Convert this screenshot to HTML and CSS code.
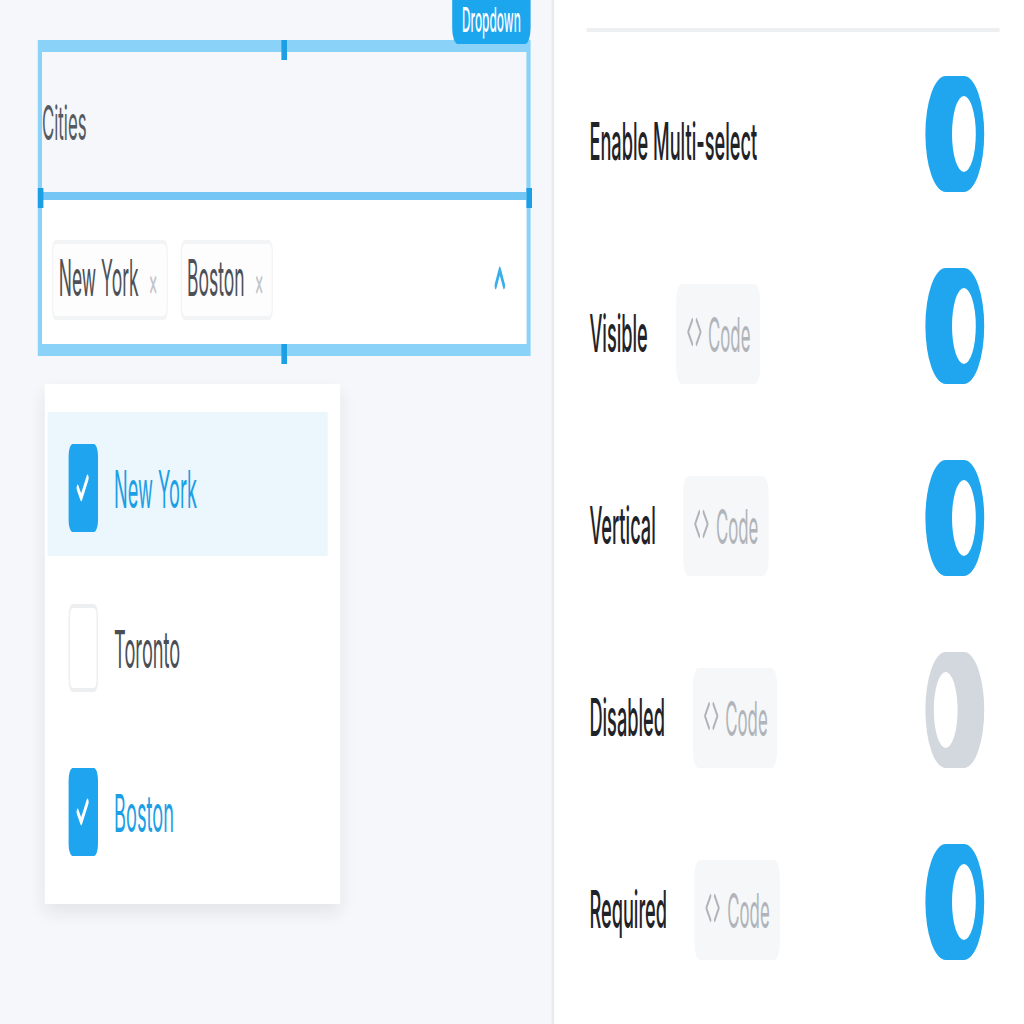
FILE: index.html
```html
<!DOCTYPE html>
<html lang="en">
<head>
<meta charset="utf-8">
<title>Dropdown builder</title>
<link rel="stylesheet" href="styles.css">
</head>
<body>
<div class="stage">
  <div class="canvas">
    <div class="selection">
      <div class="badge">Dropdown</div>
      <span class="handle handle-top"></span>
      <span class="handle handle-bottom"></span>
      <span class="handle handle-left"></span>
      <span class="handle handle-right"></span>
      <div class="field-label">Cities</div>
      <div class="field-input">
        <span class="tag"><span class="tag-text">New York</span><span class="tag-x">×</span></span>
        <span class="tag"><span class="tag-text">Boston</span><span class="tag-x">×</span></span>
        <svg class="chevron" viewBox="0 0 8 7" width="8" height="7"><polyline points="1,5.5 4,1.5 7,5.5" fill="none" stroke="#3aaee9" stroke-width="1.6" stroke-linecap="round" stroke-linejoin="round"/></svg>
      </div>
    </div>
    <div class="menu">
      <div class="option option-active">
        <span class="check check-on"><svg viewBox="0 0 10 8" width="10" height="8"><polyline points="1.5,4 4,6.5 8.5,1.5" fill="none" stroke="#fff" stroke-width="1.6" stroke-linecap="round" stroke-linejoin="round"/></svg></span>
        <span class="option-text option-text-on">New York</span>
      </div>
      <div class="option">
        <span class="check"></span>
        <span class="option-text">Toronto</span>
      </div>
      <div class="option">
        <span class="check check-on"><svg viewBox="0 0 10 8" width="10" height="8"><polyline points="1.5,4 4,6.5 8.5,1.5" fill="none" stroke="#fff" stroke-width="1.6" stroke-linecap="round" stroke-linejoin="round"/></svg></span>
        <span class="option-text option-text-on">Boston</span>
      </div>
    </div>
  </div>
  <div class="props">
    <div class="props-head"></div>
    <div class="props-rows">
      <div class="prop-row">
        <span class="prop-label">Enable Multi-select</span>
        <span class="toggle"><span class="thumb"></span></span>
      </div>
      <div class="prop-row">
        <span class="prop-label">Visible</span>
        <span class="code"><svg viewBox="0 0 12 12" width="12" height="12"><polyline points="4.5,3 1.5,6 4.5,9" fill="none" stroke="#b0b4ba" stroke-width="1.1" stroke-linecap="round" stroke-linejoin="round"/><polyline points="7.5,3 10.5,6 7.5,9" fill="none" stroke="#b0b4ba" stroke-width="1.1" stroke-linecap="round" stroke-linejoin="round"/></svg>Code</span>
        <span class="toggle"><span class="thumb"></span></span>
      </div>
      <div class="prop-row">
        <span class="prop-label">Vertical</span>
        <span class="code"><svg viewBox="0 0 12 12" width="12" height="12"><polyline points="4.5,3 1.5,6 4.5,9" fill="none" stroke="#b0b4ba" stroke-width="1.1" stroke-linecap="round" stroke-linejoin="round"/><polyline points="7.5,3 10.5,6 7.5,9" fill="none" stroke="#b0b4ba" stroke-width="1.1" stroke-linecap="round" stroke-linejoin="round"/></svg>Code</span>
        <span class="toggle"><span class="thumb"></span></span>
      </div>
      <div class="prop-row">
        <span class="prop-label">Disabled</span>
        <span class="code"><svg viewBox="0 0 12 12" width="12" height="12"><polyline points="4.5,3 1.5,6 4.5,9" fill="none" stroke="#b0b4ba" stroke-width="1.1" stroke-linecap="round" stroke-linejoin="round"/><polyline points="7.5,3 10.5,6 7.5,9" fill="none" stroke="#b0b4ba" stroke-width="1.1" stroke-linecap="round" stroke-linejoin="round"/></svg>Code</span>
        <span class="toggle toggle-off"><span class="thumb"></span></span>
      </div>
      <div class="prop-row">
        <span class="prop-label">Required</span>
        <span class="code"><svg viewBox="0 0 12 12" width="12" height="12"><polyline points="4.5,3 1.5,6 4.5,9" fill="none" stroke="#b0b4ba" stroke-width="1.1" stroke-linecap="round" stroke-linejoin="round"/><polyline points="7.5,3 10.5,6 7.5,9" fill="none" stroke="#b0b4ba" stroke-width="1.1" stroke-linecap="round" stroke-linejoin="round"/></svg>Code</span>
        <span class="toggle"><span class="thumb"></span></span>
      </div>
    </div>
  </div>
</div>
</body>
</html>
```
FILE: styles.css
```css
html, body {
  margin: 0;
  padding: 0;
  width: 1024px;
  height: 1024px;
  overflow: hidden;
  background: #ffffff;
  font-family: Inter, "Noto Sans", "Liberation Sans", sans-serif;
}

.stage {
  width: 731.5px;
  height: 256px;
  display: flex;
  transform: scale(1.4, 4);
  transform-origin: 0 0;
}

/* ---------- left canvas ---------- */
.canvas {
  width: 396px;
  flex: none;
  background: #f5f7fa;
  border-right: 2px solid #e8eaee;
  padding-top: 10px;
  box-sizing: border-box;
  display: flex;
  flex-direction: column;
}

.selection {
  position: relative;
  margin-left: 27px;
  width: 352px;
  height: 79px;
  box-sizing: border-box;
  border: 3px solid #8ad2f8;
  display: flex;
  flex-direction: column;
}

.badge {
  position: absolute;
  right: -3px;
  bottom: calc(100% + 2px);
  height: 11px;
  padding: 0 7px;
  background: #1ca6ee;
  color: #ffffff;
  font-size: 8.5px;
  font-weight: 500;
  line-height: 11px;
  border-radius: 0 0 4px 4px;
}

.handle {
  position: absolute;
  width: 4px;
  height: 5px;
  background: #1d9fe6;
}
.handle-top { left: calc(50% - 2px); top: -3.5px; }
.handle-bottom { left: calc(50% - 2px); bottom: -4.5px; }
.handle-left { left: -3.5px; top: calc(50% - 2.5px); }
.handle-right { right: -3.5px; top: calc(50% - 2.5px); }

.field-label {
  height: 34.5px;
  padding-top: 1px;
  box-sizing: border-box;
  display: flex;
  align-items: center;
  font-size: 12px;
  color: #555a60;
}

.field-input {
  flex: 1;
  background: #ffffff;
  border-top: 2px solid #74c7f4;
  display: flex;
  align-items: center;
  padding: 4px 15px 0 7px;
  gap: 9px;
}

.tag {
  height: 20px;
  box-sizing: border-box;
  display: flex;
  align-items: center;
  gap: 7px;
  padding: 0 6px 0 4px;
  background: #fdfdfe;
  border: 1px solid #f3f4f6;
  border-radius: 3px;
  font-size: 12.5px;
  color: #4d5157;
}

.tag-x {
  font-size: 10px;
  color: #c0c3c8;
}

.chevron {
  margin-left: auto;
  display: block;
}

.menu {
  margin-top: 6.5px;
  margin-left: 32px;
  width: 211px;
  height: 130.5px;
  box-sizing: border-box;
  background: #ffffff;
  box-shadow: 0 2px 7px rgba(30, 40, 60, 0.09);
  padding: 7px 9px 6.5px 2px;
  display: flex;
  flex-direction: column;
  gap: 4.5px;
}

.option {
  height: 36px;
  flex: none;
  box-sizing: border-box;
  display: flex;
  align-items: flex-start;
  padding: 8px 0 0 14.5px;
  gap: 12px;
}

.option-active {
  background: #ebf6fd;
}

.check {
  width: 21px;
  height: 22px;
  flex: none;
  box-sizing: border-box;
  border: 1px solid #eceef0;
  border-radius: 3px;
  background: #ffffff;
  display: flex;
  align-items: center;
  justify-content: center;
}

.check-on {
  background: #1fa5ef;
  border-color: #1fa5ef;
}

.check svg { display: block; }

.option-text {
  font-size: 13px;
  line-height: 21px;
  color: #4a4e55;
  padding-top: 1px;
}

.option-text-on {
  color: #1c9fe5;
}

/* ---------- right properties panel ---------- */
.props {
  flex: 1;
  background: #ffffff;
  padding: 0 18px 0 23px;
  display: flex;
  flex-direction: column;
}

.props-head {
  height: 7.5px;
  box-sizing: border-box;
  border-bottom: 1.75px solid #eeeff1;
}

.props-rows {
  margin-top: 3.75px;
  display: flex;
  flex-direction: column;
}

.prop-row {
  height: 48px;
  display: flex;
  align-items: center;
  padding-left: 2px;
}

.prop-label {
  font-size: 13px;
  font-weight: 500;
  color: #1f2328;
}

.code {
  margin-left: 20px;
  height: 25px;
  padding: 0 7px;
  display: flex;
  align-items: center;
  gap: 4px;
  background: #f6f7f8;
  border-radius: 4px;
  font-size: 12px;
  color: #b0b4ba;
}

.code svg { display: block; }

.toggle {
  margin-left: auto;
  margin-right: 11px;
  margin-bottom: 3px;
  width: 42px;
  height: 29px;
  border-radius: 15px;
  background: #1fa6ee;
  position: relative;
  flex: none;
}

.thumb {
  position: absolute;
  top: 5px;
  right: 6px;
  width: 17px;
  height: 19px;
  border-radius: 50%;
  background: #ffffff;
}

.toggle-off {
  background: #d3d8de;
}

.toggle-off .thumb {
  right: auto;
  left: 6px;
}
```
